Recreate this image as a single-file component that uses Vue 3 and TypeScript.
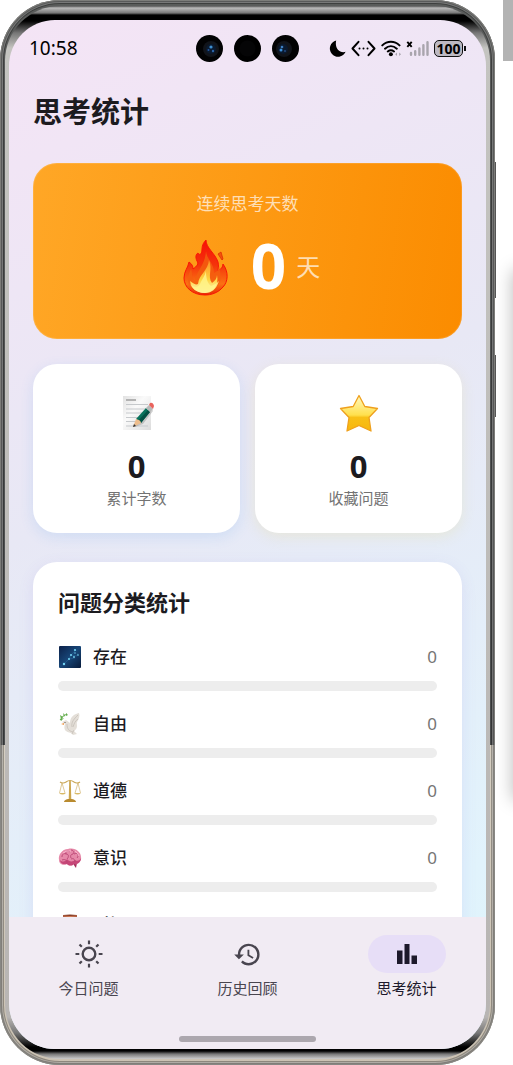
<script setup lang="ts">
import { ref } from 'vue'

type CategoryKey = 'being' | 'freedom' | 'moral' | 'mind' | 'time'
type TabKey = 'today' | 'history' | 'stats'

interface Category {
  key: CategoryKey
  name: string
  count: number
}

const streakDays = 0
const categories: Category[] = [
  { key: 'being', name: '存在', count: 0 },
  { key: 'freedom', name: '自由', count: 0 },
  { key: 'moral', name: '道德', count: 0 },
  { key: 'mind', name: '意识', count: 0 },
  { key: 'time', name: '时间', count: 0 },
]
const total = categories.reduce((sum, c) => sum + c.count, 0)
const share = (c: Category): string => (total ? (c.count / total) * 100 : 0) + '%'

const tabs: { key: TabKey; label: string }[] = [
  { key: 'today', label: '今日问题' },
  { key: 'history', label: '历史回顾' },
  { key: 'stats', label: '思考统计' },
]
const active = ref<TabKey>('stats')
</script>

<template>
  <div class="stage">
    <div class="window-edge"></div>
    <div class="window-shadow"></div>
    <div class="phone">
      <span class="side-key volume"></span>
      <span class="side-key power"></span>
      <div class="bezel">
        <div class="screen">
          <header class="status">
            <time class="clock">10:58</time>
            <div class="cameras">
              <svg viewBox="0 0 27 27" width="27" height="27">
                <circle cx="13.500" cy="13.500" r="13.500" fill="#020203" />
                <circle cx="15" cy="14" r="8" fill="#11141a" />
                <circle cx="15" cy="14" r="5" fill="#0a1a30" />
                <circle cx="15" cy="12" r="1.600" fill="#3f8fd0" />
                <circle cx="17" cy="16" r="1.200" fill="#2c65a8" />
                <circle cx="12.500" cy="15" r="1" fill="#2457a0" />
              </svg>
              <svg viewBox="0 0 27 27" width="27" height="27">
                <circle cx="13.500" cy="13.500" r="13.500" fill="#000" />
                <circle cx="13.500" cy="13.500" r="8" fill="#050506" />
              </svg>
              <svg viewBox="0 0 27 27" width="27" height="27">
                <circle cx="13.500" cy="13.500" r="13.500" fill="#020203" />
                <circle cx="12" cy="14" r="8" fill="#11141a" />
                <circle cx="11" cy="14" r="5" fill="#0a1a30" />
                <circle cx="10" cy="12" r="1.300" fill="#3f7fc0" />
                <circle cx="9" cy="15" r="1.500" fill="#3b8fd8" />
                <circle cx="13" cy="16" r="1" fill="#244a80" />
              </svg>
            </div>
            <div class="indicators">
              <svg viewBox="0 0 17 17" width="17" height="17">
                <path d="M7.200.6A8.200 8.200 0 1 0 16.600 11.800C10.500 13.600 5.400 8 7.200.6Z" fill="#000" />
              </svg>
              <svg viewBox="0 0 25 17" width="25" height="17">
                <path d="M7.500 1.800 1.500 8.500l6 6.700M17.500 1.800l6 6.700-6 6.700" fill="none" stroke="#000" stroke-width="2" stroke-linecap="round" stroke-linejoin="round" />
                <circle cx="8.500" cy="8.500" r="1" /><circle cx="12.500" cy="8.500" r="1" /><circle cx="16.500" cy="8.500" r="1" />
              </svg>
              <svg viewBox="0 0 20 17" width="20" height="17">
                <g fill="none" stroke="#000" stroke-width="2" stroke-linecap="round">
                  <path d="M1.300 5.400C6.300.6 13.500.6 18.500 5.400M4 8.700c3.600-3.200 8.200-3.200 11.800 0M6.800 11.500c2-1.500 4.200-1.500 6.200 0" />
                </g>
                <circle cx="9.900" cy="14.300" r="2" />
                <path d="M14.200 14.300 16 12.600v3.400ZM20 14.300 18.200 12.600v3.400Z" fill="#a5a1aa" />
              </svg>
              <svg viewBox="0 0 23 17" width="23" height="17">
                <path d="m1.300 1.800 4.400 5M5.700 1.800l-4.400 5" stroke="#000" stroke-width="1.900" />
                <g stroke="#a9a5ad" stroke-width="2.400" stroke-linecap="round">
                  <path d="M5 13v1.800M9.200 11.200v3.600M13.400 8.500v6.300M17.400 5.300v9.500M21.500 2.300v12.500" />
                </g>
              </svg>
              <span class="battery">100</span>
            </div>
          </header>

          <main class="content">
            <h1>思考统计</h1>

            <section class="hero">
              <p>连续思考天数</p>
              <div class="streak">
                <svg class="fire" viewBox="0 0 60 58" width="60" height="58">
                  <defs>
                    <linearGradient id="flameOuter" x1="0" y1="0" x2="0" y2="1">
                      <stop offset="0" stop-color="#f80f07" /><stop offset=".45" stop-color="#f4330b" />
                      <stop offset=".8" stop-color="#fb7212" /><stop offset="1" stop-color="#e92806" />
                    </linearGradient>
                    <linearGradient id="flameInner" x1="0" y1="0" x2="0" y2="1">
                      <stop offset="0" stop-color="#ff9626" /><stop offset=".6" stop-color="#ffe449" /><stop offset="1" stop-color="#fffbd6" />
                    </linearGradient>
                  </defs>
                  <path d="M31 2C31 10 40 15 43 24c1 4 0 7 0 9 3-2 5-4 5-7 6 8 5 18 0 23C43 55 36 57 30 57 17 57 9 49 9 40c0-7 4-10 5-16 3 2 4 4 4 7 4-3 6-5 4-8-2-4-1-7 1-8 2 3 4 1 4-4 0-4 2-7 4-9Z" fill="url(#flameOuter)" stroke="#f81606" stroke-width="1" />
                  <path d="M31 13c1 9 8 12 8 22 4-2 5-4 5-7 3 11 3 24-13 26C18 54 12 48 13 40c0-4 2-6 3-9 2 6 0 9 4 12 1-10 10-15 11-30Z" fill="#f4600f" opacity=".8" />
                  <path d="M34 22c4 10-2 16 3 23 3-2 5-5 5-8 2 10-3 17-12 18-9 0-14-5-15-12 4 3 6 4 8 3 1-10 10-13 11-24Z" fill="url(#flameInner)" opacity=".9" />
                  <path d="M15 46c4 4 8 4 10 0 2-5 5-8 6-13 0 6 1 12 5 15 3-1 6-3 8-5-3 9-8 12-14 12s-12-3-15-9Z" fill="#fff58a" opacity=".85" />
                  <path d="m43 16 3-2 2 7-1 1Z" fill="#f5520b" stroke="#dd3005" stroke-width=".8" />
                </svg>
                <strong>{{ streakDays }}</strong>
                <span class="unit">天</span>
              </div>
            </section>

            <div class="pair">
              <section class="tile words">
                <svg viewBox="0 0 40 40" width="40" height="40">
                  <defs>
                    <linearGradient id="sheet" x1="0" y1="0" x2="1" y2="1">
                      <stop offset="0" stop-color="#e2e2e2" /><stop offset=".4" stop-color="#fafafa" /><stop offset="1" stop-color="#dcdcdc" />
                    </linearGradient>
                  </defs>
                  <path d="M6 3h28v34H6Z" fill="url(#sheet)" />
                  <path d="M9 7h10" stroke="#b2b2b2" stroke-width="2" />
                  <path d="M9 11.500h22M9 16h20M9 20h18M9 24.500h15M9 28.500h13M9 33h22" stroke="#c6c9cc" stroke-width="1" />
                  <path d="m16 34 12-13 6-7 2 4-10 13-8 3Z" fill="#777" opacity=".35" />
                  <path d="m19 26 10-11 4 4-9 11Z" fill="#08725c" />
                  <path d="m21 28 10-11 2 2-9 11Z" fill="#045044" />
                  <path d="m29 15 3-3 4 4-3 3Z" fill="#b8b9b9" />
                  <path d="m32 12 1-2q3-1 4 3l-1 3Z" fill="#e9635d" />
                  <path d="m19 26-3 8 8-4q0-3-5-4Z" fill="#edbd8d" /><path d="m17 31-1 3 3-1Z" fill="#333" />
                </svg>
                <strong>0</strong>
                <span>累计字数</span>
              </section>
              <section class="tile saved">
                <svg viewBox="0 0 40 40" width="40" height="40">
                  <defs>
                    <linearGradient id="gold" x1="0" y1="0" x2="0" y2="1">
                      <stop offset="0" stop-color="#fff9c2" /><stop offset=".55" stop-color="#ffe04d" />
                      <stop offset=".62" stop-color="#f8c017" /><stop offset="1" stop-color="#f7b60d" />
                    </linearGradient>
                  </defs>
                  <path d="M20 2.500 25.800 13.500 38.500 15.500 30 24.500 32 38 20 32.500 8 38 10 24.500 1.500 15.500 14.200 13.500Z" fill="url(#gold)" stroke="#efa01c" stroke-width="1.300" stroke-linejoin="round" />
                </svg>
                <strong>0</strong>
                <span>收藏问题</span>
              </section>
            </div>

            <section class="categories">
              <h2>问题分类统计</h2>
              <ul>
                <li v-for="c in categories" :key="c.key">
                  <div class="row">
                    <svg v-if="c.key === 'being'" viewBox="0 0 24 24" width="24" height="24">
                      <defs>
                        <linearGradient id="night" x1="0" y1="0" x2="1" y2="1">
                          <stop offset="0" stop-color="#0c2149" /><stop offset=".5" stop-color="#174678" /><stop offset="1" stop-color="#071a3a" />
                        </linearGradient>
                      </defs>
                      <rect x="1" y="1" width="22" height="22" rx="1" fill="url(#night)" />
                      <path d="m6 19 5-5 2-4 4-4M13 10l6 1 1-3M11 14l6-1" stroke="#2c6a9c" stroke-width=".5" fill="none" />
                      <g fill="#74d6f5">
                        <circle cx="6" cy="19" r="1.200" /><circle cx="11" cy="14" r="1" /><circle cx="13" cy="10" r="1" />
                        <circle cx="17" cy="5" r="1.100" /><circle cx="16" cy="12" r=".9" /><circle cx="20" cy="10" r=".8" /><circle cx="17" cy="8" r=".7" />
                      </g>
                    </svg>
                    <svg v-else-if="c.key === 'freedom'" viewBox="0 0 24 24" width="24" height="24">
                      <path d="M21 1c-5 1-9 4-9 10L8 8 4 10l3 2c-2 6 1 8 6 9l2 2 4-1-3-3c5-3 2-7 3-9 2-3 3-6 2-9Z" fill="#e4dfd8" />
                      <path d="M20 3c-4 4-7 7-6 12M20 7c-3 2-4 5-5 8M9 12c0 5 2 7 6 8M16 18l-2 4" stroke="#c5bfb8" stroke-width=".8" fill="none" />
                      <path d="m6 11-3 1 3 1Z" fill="#ef9d50" />
                      <circle cx="7" cy="10.500" r=".6" fill="#554b42" />
                      <path d="M2 8q3-5 7-6" stroke="#67a94f" stroke-width="1" fill="none" />
                      <path d="m2 3 3 2-2 2ZM5 1l2 2-1 2ZM8 1l2 2-2 1ZM2 7l4-1-3 3Z" fill="#62ae4c" />
                    </svg>
                    <svg v-else-if="c.key === 'moral'" viewBox="0 0 24 24" width="24" height="24">
                      <g fill="none" stroke="#c9a552" stroke-width="1">
                        <path d="M2 3q3 2 6 0 4-3 8 0 3 2 6 0" stroke-width="1.200" />
                        <path d="M4 4 1.500 14M4 4l3 10M20 4l-3 10M20 4l2.500 10" stroke-width=".6" />
                      </g>
                      <path d="M11.200 2h1.600l.5 19h-2.600Z" fill="#cba54c" />
                      <path d="M1 14h7q-3.500 3-7 0ZM16 14h7q-3.500 3-7 0Z" fill="#d8b966" />
                      <path d="M6 23q0-2 4-3h4q4 1 4 3Z" fill="#b98b2f" />
                    </svg>
                    <svg v-else-if="c.key === 'mind'" viewBox="0 0 24 24" width="24" height="24">
                      <path d="M15 17c1 2 2 4 3 5l1-5Z" fill="#a52f5b" />
                      <path d="M1 14C0 9 4 3 10 3c7-2 13 3 13 8 1 4-3 8-7 7-2 2-5 2-7 0-4 2-8 0-8-4Z" fill="#e689a9" />
                      <path d="M2 14c3 3 6 1 7-1 2 3 6 3 8 1 3 2 5 0 6-2 0 4-4 7-7 6-2 2-5 2-7 0-4 1-7-1-7-4Z" fill="#c64778" />
                      <path d="M4 11c0-3 2-4 4-3-1-3 2-4 4-2M8 8c3 0 3 3 1 5M13 4c2 0 4 2 2 4-2 0-3 2-2 4M16 8c4-2 5 2 3 4M4 14c3-1 5 0 5 3M13 13c2-1 4 0 4 3" fill="none" stroke="#b84372" stroke-width=".9" />
                      <path d="M5 7q4-3 8-2M17 5q3 2 4 5" fill="none" stroke="#ffc4d7" stroke-width=".8" />
                    </svg>
                    <svg v-else viewBox="0 0 24 24" width="24" height="24">
                      <path d="M5 2q7-1 14 0v4H5ZM5 20h14v3H5Z" fill="#853b24" />
                      <path d="M5 3q7 1 14 0" stroke="#d27d59" fill="none" />
                      <path d="M7 6h10c0 4-3 5-4 6 1 2 4 4 4 8H7c0-4 3-6 4-8-1-1-4-2-4-6Z" fill="#d9e8ed" />
                    </svg>
                    <span :id="'name-' + c.key" class="name">{{ c.name }}</span>
                    <span class="count">{{ c.count }}</span>
                  </div>
                  <div class="track" role="progressbar" :aria-labelledby="'name-' + c.key" :aria-valuenow="c.count">
                    <div class="fill" :style="{ width: share(c) }"></div>
                  </div>
                </li>
              </ul>
            </section>
          </main>

          <footer class="dock">
            <nav>
              <button v-for="t in tabs" :key="t.key" type="button" :class="{ on: active === t.key }" @click="active = t.key">
                <span class="pill">
                  <svg v-if="t.key === 'today'" viewBox="0 0 30 30" width="30" height="30">
                    <circle cx="15" cy="15" r="6.300" fill="none" stroke="currentColor" stroke-width="2.400" />
                    <path d="M15 1.500v3.800M15 24.700v3.800M1.500 15h3.800M24.700 15h3.800M5.500 5.500l2.300 2.300M22.200 22.200l2.300 2.300M24.500 5.500l-2.300 2.300M7.800 22.200l-2.300 2.300" stroke="currentColor" stroke-width="2.200" />
                  </svg>
                  <svg v-else-if="t.key === 'history'" viewBox="0 0 24 24" width="29" height="29">
                    <path d="M13 3a9 9 0 0 0-9 9H1l3.890 3.890.07.14L9 12H6c0-3.870 3.130-7 7-7s7 3.130 7 7-3.130 7-7 7c-1.930 0-3.680-.79-4.940-2.060l-1.420 1.420A8.954 8.954 0 0 0 13 21a9 9 0 0 0 0-18Zm-1 5v5l4.280 2.540.72-1.210-3.500-2.080V8Z" fill="currentColor" />
                  </svg>
                  <svg v-else viewBox="0 0 30 30" width="30" height="30">
                    <path d="M5 11.500h5.500V25H5ZM12.500 5h5v20h-5ZM19.500 16.500H25V25h-5.500Z" fill="currentColor" />
                  </svg>
                </span>
                <span>{{ t.label }}</span>
              </button>
            </nav>
            <div class="home-bar"></div>
          </footer>
        </div>
      </div>
    </div>
  </div>
</template>

<style>
body {
  margin: 0;
  background: #fff;
}
</style>

<style scoped>
* {
  box-sizing: border-box;
}
.stage {
  position: relative;
  height: 100vh;
  padding-right: 18px;
  overflow: hidden;
  background: #fff;
  color: #1c1b1f;
  font-family: "Noto Sans", "Noto Sans CJK SC", sans-serif;
}
.stage svg {
  display: block;
  flex: none;
}
.window-edge {
  position: absolute;
  top: 0;
  right: 0;
  width: 10px;
  height: 61px;
  background: #b3b3b3;
}
.window-shadow {
  position: absolute;
  top: 270px;
  bottom: 265px;
  left: 100%;
  width: 20px;
  box-shadow: 0 0 18px rgba(0, 0, 0, 0.28);
}
.phone {
  position: relative;
  height: 100%;
  padding: 6px 5px;
  border-radius: 60px;
  background: linear-gradient(#5a5c5b 0, #4b4d4e 70%, #d6cfc2 70%, #cbc2b3 100%);
  box-shadow:
    inset 0 0 0 1px rgba(140, 140, 135, 0.7),
    inset 0 0 0 2px rgba(20, 20, 20, 0.3),
    inset 0 0 0 3px rgba(255, 255, 255, 0.3),
    inset 0 0 0 4px rgba(0, 0, 0, 0.3);
}
.side-key {
  position: absolute;
  left: 100%;
  width: 1px;
  background: #555;
}
.volume {
  top: 162px;
  height: 136px;
}
.power {
  top: 355px;
  height: 62px;
}
.bezel {
  height: 100%;
  padding: 14px 4px 10px;
  border-radius: 55px;
  background: linear-gradient(
    #555 0,
    #bbb 2px,
    #777 7px,
    #000 9px,
    #000 15px,
    #777 27px,
    #c4c4c0 42px,
    #b8b5b3 calc(100% - 42px),
    #777 calc(100% - 26px),
    #000 calc(100% - 12px),
    #000 calc(100% - 8px),
    #777 calc(100% - 5px),
    #ccc 100%
  );
}
.screen {
  display: flex;
  flex-direction: column;
  height: 100%;
  overflow: hidden;
  border-radius: 46px;
  background: linear-gradient(155deg, #f4e4f5 0, #f1e5f5 12%, #e8e8f5 42%, #e1f3fc 85%, #def5fc 100%);
}
.status {
  display: grid;
  flex: none;
  grid-template-columns: 1fr auto 1fr;
  align-items: center;
  height: 56px;
  padding: 0 20px;
}
.clock {
  color: #000;
  font-size: 19px;
  font-weight: 400;
  line-height: 24px;
}
.cameras {
  display: flex;
  gap: 11px;
}
.indicators {
  display: flex;
  align-items: center;
  justify-content: flex-end;
  gap: 5px;
}
.battery {
  position: relative;
  width: 29px;
  height: 17px;
  margin-right: 3px;
  border: 1px solid #111;
  border-radius: 5px;
  background: #bdb9c2;
  color: #000;
  font-size: 14px;
  font-weight: 700;
  line-height: 15px;
  text-align: center;
}
.battery::after {
  position: absolute;
  top: 5px;
  right: -4px;
  width: 2px;
  height: 5px;
  background: #111;
  content: "";
}
.content {
  flex: 1;
  min-height: 0;
  padding: 16px 24px 24px;
  overflow-y: auto;
  scrollbar-width: none;
}
h1,
h2,
p,
ul {
  margin: 0;
  padding: 0;
}
h1 {
  font-size: 29px;
  font-weight: 700;
  line-height: 40px;
}
.hero {
  margin-top: 31px;
  padding: 29px 24px 39px;
  border-radius: 24px;
  background: linear-gradient(98deg, #ffa726, #fb8c00);
  box-shadow: inset 0 0 0 1px rgba(255, 255, 255, 0.12);
  color: rgba(255, 255, 255, 0.7);
}
.hero p {
  font-size: 17px;
  line-height: 24px;
  text-align: center;
}
.streak {
  display: flex;
  align-items: center;
  justify-content: center;
  height: 66px;
  margin-top: 18px;
}
.streak strong {
  margin: 0 10px 4px 16px;
  color: #fff;
  font-size: 62px;
  line-height: 62px;
}
.unit {
  font-size: 24px;
  line-height: 32px;
}
.pair {
  display: grid;
  grid-template-columns: 1fr 1fr;
  gap: 15px;
  margin-top: 25px;
}
.tile {
  display: flex;
  flex-direction: column;
  align-items: center;
  padding: 29px 16px 24px;
  border-radius: 24px;
  background: #fff;
}
.words {
  box-shadow: 0 4px 14px rgba(66, 150, 243, 0.14);
}
.saved {
  box-shadow: 0 4px 14px rgba(235, 210, 80, 0.16);
}
.tile strong {
  margin-top: 12px;
  font-size: 31px;
  line-height: 42px;
}
.tile span {
  color: #737373;
  font-size: 15px;
  line-height: 22px;
}
.categories {
  margin-top: 29px;
  padding: 25px;
  border-radius: 24px;
  background: #fff;
  box-shadow: 0 4px 16px rgba(120, 90, 220, 0.1);
}
h2 {
  font-size: 22px;
  font-weight: 700;
  line-height: 30px;
}
ul {
  display: grid;
  gap: 17px;
  margin-top: 24px;
  list-style: none;
}
.row {
  display: flex;
  align-items: center;
  gap: 11px;
  height: 32px;
  font-size: 17px;
  line-height: 24px;
}
.name {
  flex: 1;
  font-weight: 500;
}
.count {
  color: #757575;
}
.track {
  height: 10px;
  margin-top: 8px;
  overflow: hidden;
  border-radius: 5px;
  background: #ededed;
}
.fill {
  height: 100%;
  background: #7e57c2;
}
.dock {
  display: flex;
  flex: none;
  flex-direction: column;
  align-items: center;
  padding: 18px 0 7px;
  background: #f1ebf3;
}
nav {
  display: grid;
  grid-template-columns: repeat(3, 1fr);
  width: 100%;
}
nav button {
  display: flex;
  flex-direction: column;
  align-items: center;
  gap: 4px;
  padding: 0;
  border: 0;
  background: none;
  color: #49454f;
  font-family: inherit;
  font-size: 15px;
  font-weight: 400;
  line-height: 22px;
}
nav .on {
  color: #1d192b;
}
.pill {
  display: flex;
  align-items: center;
  justify-content: center;
  width: 78px;
  height: 38px;
  border-radius: 19px;
}
.on .pill {
  background: #e7def7;
}
.home-bar {
  width: 137px;
  height: 6px;
  margin-top: 37px;
  border-radius: 3px;
  background: #aca7ae;
}
</style>
